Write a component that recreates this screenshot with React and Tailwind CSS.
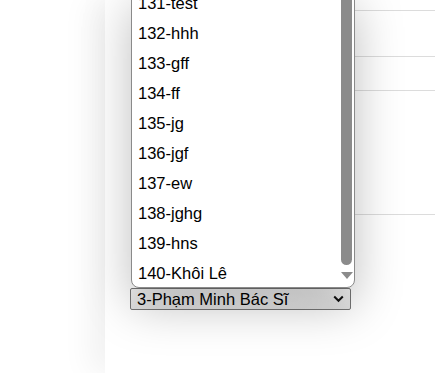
import React from 'react'

const options = ['131-test', '132-hhh', '133-gff', '134-ff', '135-jg', '136-jgf', '137-ew', '138-jghg', '139-hns', '140-Khôi Lê']

const App = () => {
    return (
        <div className="relative w-[435px] h-[373px] overflow-hidden bg-white flex font-['Liberation_Sans',Arial,sans-serif]">
            <div className="w-[105px] shrink-0 bg-white" />
            <div className="relative flex-1 bg-white shadow-[-14px_0_30px_rgba(0,0,0,0.06)] flex flex-col">
                <div className="pl-[40px]">
                    <div className="h-[11px] border-b border-[#dcdcdc]" />
                    <div className="h-[46px] border-b border-[#dcdcdc]" />
                    <div className="h-[34px] border-b border-[#dcdcdc]" />
                    <div className="h-[124px] border-b border-[#dcdcdc]" />
                </div>
                <div className="pl-[25px] pt-[73px]">
                    <div className="w-[221px] h-[22px] border border-[#767676] rounded-[2px] bg-gradient-to-b from-[#f4f4f4] to-[#e3e3e3] flex items-center justify-between pl-[6px] pr-[6px] text-[16.5px] leading-none text-black">
                        <span>3-Phạm Minh Bác Sĩ</span>
                        <svg width="11" height="8" viewBox="0 0 11 8" fill="none">
                            <path d="M1.2 1.5 L5.5 5.8 L9.8 1.5" stroke="#111" strokeWidth="2" />
                        </svg>
                    </div>
                </div>
            </div>

            <div className="absolute left-[131px] top-[-13px] w-[224px] h-[301px] bg-white border border-[#8a8a8a] rounded-b-[8px] shadow-[0_18px_48px_rgba(0,0,0,0.26)] flex overflow-hidden">
                <div className="flex-1 flex flex-col">
                    {options.map((o) => (
                        <div key={o} className="h-[30px] shrink-0 flex items-center pl-[6px] text-[16.5px] text-black">
                            {o}
                        </div>
                    ))}
                </div>
                <div className="w-[15px] shrink-0 flex flex-col items-center pb-[4px]">
                    <div className="w-[11px] h-[277px] bg-[#8b8b8b] rounded-b-[6px]" />
                    <svg className="mt-[7px]" width="12" height="8" viewBox="0 0 12 8">
                        <path d="M0 0 H12 L6 7 Z" fill="#8b8b8b" />
                    </svg>
                </div>
            </div>
        </div>
    )
}

export default App
